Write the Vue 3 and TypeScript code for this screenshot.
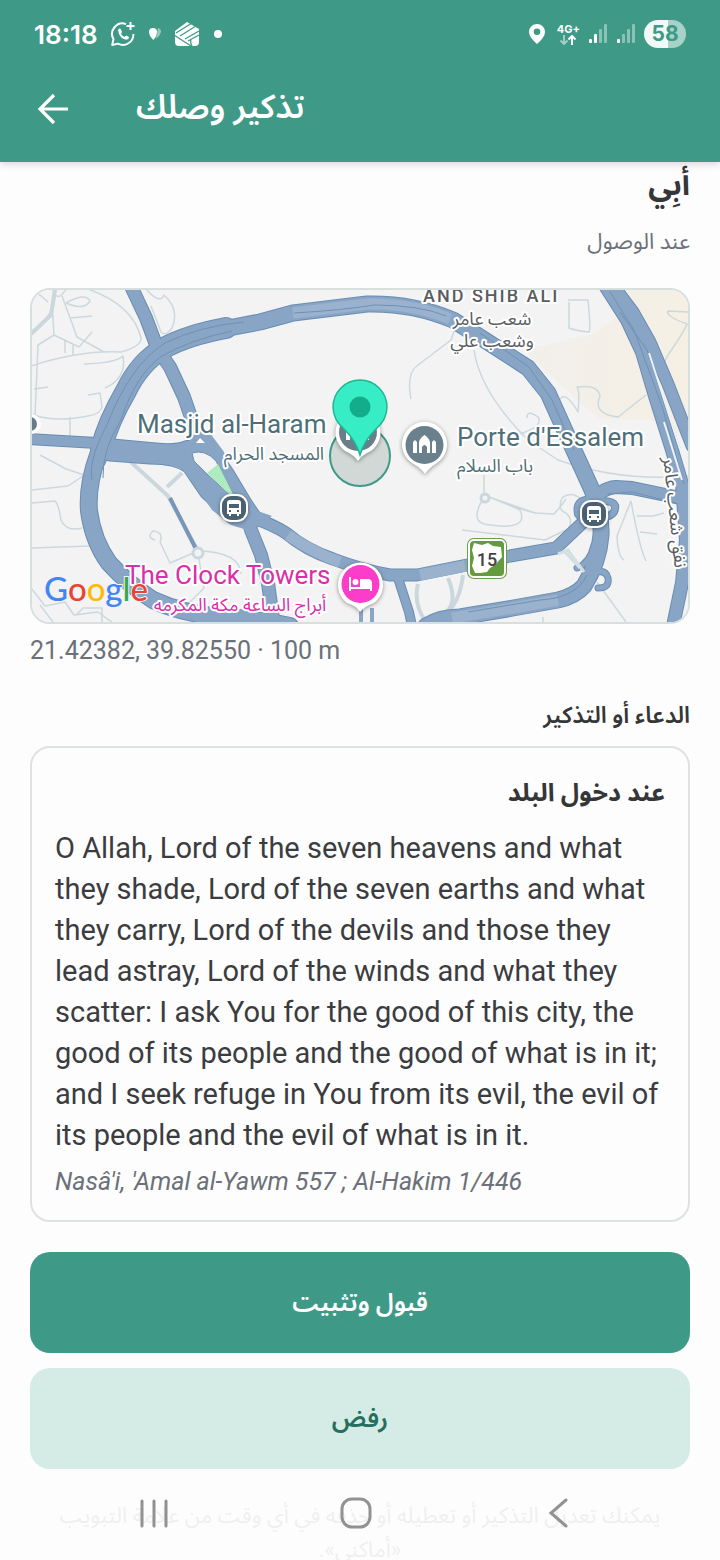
<script setup lang="ts">
interface Road { d: string; w: number }

const roads: Road[] = [
  { d: 'M604 284L627 320L642 352L655 396L672 450L682 484L686 540L682 583L673 626', w: 14 },
  { d: 'M612 284L633 312L650 342L668 384L692 446', w: 13 },
  { d: 'M130 284L146 318L158 350L170 367L184 397L193 423L202 443', w: 14 },
  { d: 'M28 439L97 443L150 448Q176 451 187 446L205 446Q222 462 228 472L246 502L258 520', w: 12 },
  { d: 'M110 453L150 456Q178 456 190 466L207 491L233 516L252 521', w: 17 },
  { d: 'M247 515L251 530L261 555L268 583L274 626', w: 14 },
  { d: 'M233 512Q265 520 286 533Q306 550 333 559Q362 570 390 575L417 575L467 565L510 556L556 548L575 530L596 510', w: 13 },
  { d: 'M398 578L409 612L412 626', w: 10 },
  { d: 'M590 506Q600 488 616 487L632 488L680 498', w: 14 },
  { d: 'M592 500Q575 498 578 514Q584 522 594 514', w: 8 },
  { d: 'M594 502Q620 498 614 512Q608 520 594 514', w: 8 },
  { d: 'M597 572Q606 570 608 578Q610 588 598 588', w: 7 },
  { d: 'M577 568Q590 563 594 545', w: 7 },
  { d: 'M98 455Q87 485 89 511Q93 541 109 563Q128 584 153 600Q183 614 222 617Q252 618 290 626', w: 18 },
  { d: 'M98 460Q106 431 124 397Q137 367 160 352Q184 338 218 330L260 322L293 313L367 304Q413 303 453 320L480 337L528 368L548 393L566 433L592 490Q602 515 601 535Q599 562 584 586Q575 596 558 600L513 608L460 617Q440 617 426 626', w: 17 },
  { d: 'M101 449Q108 422 126 391Q140 362 164 348Q188 335 226 328', w: 22 },
]

const seams: string[] = [
  'M92 480Q88 460 107 425Q130 365 165 343Q200 326 244 322',
  'M103 478Q102 450 121 420Q136 374 162 356Q190 340 232 331',
  'M294 313Q345 310 374 305Q420 305 446 316',
  'M480 333L529 367L552 400L574 450',
  'M620 312L647 350L680 448',
  'M610 292L634 330L662 406L684 484',
  'M608 494L632 492L676 503',
  'M468 612L540 600Q576 598 587 575',
]

const lanes: string[] = [
  'M56 289L54 305Q48 320 31 332M66 289Q57 304 53 289M52 304L54 335L79 347M62 296L77 337L104 352M54 335L38 345L34 440M31 366Q80 350 121 352Q142 346 141 338Q133 305 88 289',
  'M66 303Q86 292 90 301Q84 311 66 303M70 318L92 316M92 332L79 347M34 290L48 302M84 364Q116 363 123 356Q127 378 105 388M34 389L48 387M88 395L100 393L102 407Q101 414 88 416Q54 423 31 414M70 417V438M65 339V353M73 345V355',
  'M146 289Q160 305 164 295Q180 309 172 328Q166 337 161 332L151 306',
  'M31 490L68 486L83 476M31 503L55 501Q59 505 61 520Q66 532 82 528M40 455L66 469L84 475M31 548L90 546M31 588L45 606L65 602L74 615L98 612M40 605L53 622M76 615L83 608H102V622M98 612L113 623',
  'M198 551L170 563L160 542Q164 532 153 531Q146 537 155 540M198 551Q240 552 241 574M198 553L204 588L190 602',
  'M458 320L451 340L418 365Q406 373 411 399M474 350Q480 392 528 440L558 460Q620 482 690 476M568 300H588Q591 330 589 332Q577 331 569 328V302',
  'M560 399Q566 391 578 412Q580 390 577 387Q598 384 600 396Q592 414 618 417L646 395M690 312L668 311Q665 316 687 324Q684 332 668 355L655 382M527 418Q527 409 538 417Q544 426 520 434',
  'M484 475V497Q470 520 484 524Q530 532 520 510Q500 501 489 497M489 497L535 513M462 530L545 540L568 529Q574 520 566 513Q557 510 562 498Q573 489 585 503M497 500Q525 511 536 513L554 514Q562 505 566 499',
  'M631 501L617 536Q618 557 624 560M631 501Q640 550 646 561M637 516H653L664 513M640 532L657 534M597 582L626 622M543 617V623',
]
</script>

<template>
  <div class="screen">
    <header class="top">
      <div class="status">
        <div class="group">
          <span class="clock">18:18</span>
          <svg class="s-wa" viewBox="0 0 26 26" width="26" height="26" fill="none" stroke="#fff" stroke-width="2">
            <path d="M16 3.1A10.4 10.4 0 0 0 3.5 18.1L2.2 24L8 22.6A10.5 10.5 0 0 0 23.4 13" stroke-linejoin="round" />
            <path d="M20.5 1V9M16.5 5H24.5" />
            <path d="M8 9Q9 6.5 10.7 8L12 11L11 13Q13 15.3 14.5 16L16.2 14.5L19 16Q19 18.5 16.5 18.7Q9 17.5 8 9Z" fill="#fff" stroke="none" />
          </svg>
          <svg viewBox="0 0 14 14" width="14" height="14">
            <path d="M10 1A4 4 0 0 1 13 5Q12 9 8 12Z" fill="#fff" opacity=".45" />
            <path d="M5 1A4 4 0 0 1 9 5Q9 9 5.5 13Q1 9 1 5A4 4 0 0 1 5 1Z" fill="#fff" />
          </svg>
          <svg viewBox="0 0 26 26" width="26" height="26">
            <path d="M1 10L13 1L25 8V21Q25 25 21 25H5Q1 25 1 21Z" fill="#fff" />
            <path d="M2 12L18 2M6 15L22 5M11 18L25 10M0 14L17 25M14 20L25 14M17 19Q16 22 18 25" stroke="#3e9a87" stroke-width="1.3" fill="none" />
          </svg>
          <i class="dot"></i>
        </div>
        <div class="group right">
          <svg viewBox="0 0 18 22" width="18" height="22">
            <path d="M9 1A8 8 0 0 1 17 9Q17 14 9 21Q1 14 1 9A8 8 0 0 1 9 1ZM9 5.5A3.3 3.3 0 1 0 9 12.1A3.3 3.3 0 1 0 9 5.5Z" fill="#fff" fill-rule="evenodd" />
          </svg>
          <div class="net">
            <span>4G+</span>
            <svg viewBox="0 0 18 10" width="18" height="10" fill="none" stroke="#fff" stroke-width="2">
              <path d="M5 0V9M1.5 5.5L5 9L8.500 5.5" opacity=".5" />
              <path d="M13 10V1M9.500 4.500L13 1L16.500 4.500" />
            </svg>
          </div>
          <svg viewBox="0 0 20 20" width="20" height="20" fill="#fff">
            <rect x="1" y="15" width="3" height="4" rx="1" /><rect x="6" y="10" width="3" height="9" rx="1" />
            <rect x="11" y="5" width="3" height="14" rx="1" opacity=".4" /><rect x="16" y="0" width="3" height="19" rx="1" opacity=".4" />
          </svg>
          <svg viewBox="0 0 20 20" width="20" height="20" fill="#fff">
            <rect x="1" y="15" width="3" height="4" rx="1" /><rect x="6" y="10" width="3" height="9" rx="1" opacity=".4" />
            <rect x="11" y="5" width="3" height="14" rx="1" opacity=".4" /><rect x="16" y="0" width="3" height="19" rx="1" opacity=".4" />
          </svg>
          <span class="battery">58</span>
        </div>
      </div>
      <div class="appbar">
        <button class="back" type="button" aria-label="رجوع">
          <svg viewBox="0 0 32 32" width="32" height="32" fill="none" stroke="#fff" stroke-width="3.200">
            <path d="M31 16H3M17 2L3 16L17 30" />
          </svg>
        </button>
        <h1 lang="ar" dir="rtl">تذكير وصلك</h1>
      </div>
    </header>

    <main lang="ar" dir="rtl">
      <h2 class="name">أبِي</h2>
      <p class="when">عند الوصول</p>

      <div class="map" dir="ltr">
        <svg viewBox="32 290 656 332" role="img" aria-label="Masjid al-Haram">
          <defs>
            <linearGradient id="sand" x1="0" x2="1"><stop offset="0" stop-color="#f2efec" /><stop offset="1" stop-color="#f5f0e3" /></linearGradient>
          </defs>
          <rect x="31" y="288" width="658" height="336" fill="#f4f3f4" />
          <path d="M624 288H690V440L650 420L600 419L577 400L540 365L525 350L590 335L616 318Z" fill="url(#sand)" />
          <path v-for="(d, i) in lanes" :key="'l' + i" :d="d" class="lane" />
          <path d="M122 454L155 484L168 496L198 551M167 487L182 473" class="street" />
          <path d="M418 584Q413 604 426 622M448 578Q458 602 446 612M463 575Q460 600 448 612M55 289L51 315L31 334" class="street" />
          <path v-for="(r, i) in roads" :key="'c' + i" :d="r.d" class="casing" :stroke-width="r.w" />
          <path v-for="(r, i) in roads" :key="'f' + i" :d="r.d" class="road" :stroke-width="r.w - 2" />
          <path d="M293 313L367 304Q413 303 450 319M288 535Q312 552 340 562M420 575L465 566M452 618L513 608L558 600" class="light" />
          <path v-for="(d, i) in seams" :key="'s' + i" :d="d" class="seam" />
          <path d="M649 353L680 449M664 422L682 480" stroke="#eef2f6" stroke-width="2" fill="none" />
          <path d="M170 498L196 549" stroke="#7796b9" stroke-width="4" />
          <path d="M361 608V623M372 608V623" stroke="#8ba6c5" stroke-width="4" />
          <path d="M165 449L187 443L195 433H210L224 452L235 482L255 510L272 516L250 531L231 525L212 510L197 488L183 470L165 463Z" fill="#89a5c5" />
          <path d="M192 453Q205 449 216 461L233 494H229L207 474L194 461Z" class="hole" />
          <path d="M207 473L218 464L233 494H229Z" fill="#aeecc0" />
          <path d="M200 438L205 443H196Z" fill="#fff" />
          <path d="M558 554L568 550L584 572M563 550L580 568" stroke="#d4dfe3" stroke-width="3" fill="none" />
          <circle cx="198" cy="553" r="5" class="round" /><circle cx="485" cy="498" r="4" class="round" />

          <circle cx="31" cy="424" r="10" fill="#fff" /><circle cx="30" cy="424" r="7" fill="#647d88" />

          <g class="label" fill="#4f6f78">
            <text x="137" y="433" class="en">Masjid al-Haram</text>
            <text x="274" y="460" class="ar">المسجد الحرام</text>
            <text x="457" y="446" class="en">Porte d'Essalem</text>
            <text x="495" y="472" class="ar">باب السلام</text>
          </g>
          <g class="label" fill="#5a5d5f">
            <text x="423" y="302" class="area">AND SHIB ALI</text>
            <text x="492" y="325" class="ar">شعب عامر</text>
            <text x="492" y="347" class="ar">وشعب علي</text>
            <text class="ar" transform="translate(669 513) rotate(84)">نفق شعب عامر</text>
          </g>
          <g class="label" fill="#d92fa9">
            <text x="125" y="584" class="en">The Clock Towers</text>
            <text x="240" y="611" class="ar">أبراج الساعة مكة المكرمه</text>
          </g>

          <circle cx="360" cy="456" r="30" fill="#78958a" fill-opacity=".28" stroke="#3e9a87" stroke-width="2" />
          <g class="pin">
            <path d="M358 461Q354 455 345 451A22.500 22.500 0 1 1 371 451Q362 455 358 461Z" fill="#fff" />
            <circle cx="358" cy="432" r="19" fill="#687f8b" />
            <path d="M346 440V430L348 428L350 430V440ZM365 440V430L367 428L369 430V440Z" fill="#fff" />
          </g>
          <path d="M360 455Q356 441 345 430Q333 420 333 407A27 27 0 0 1 387 407Q387 420 375 430Q364 441 360 455Z" fill="#36edc5" stroke="#20b692" stroke-width="1.500" />
          <circle cx="360" cy="407" r="10.500" fill="#14ad8b" />

          <g class="pin">
            <path d="M425 474Q421 468 412 463A22.500 22.500 0 1 1 437 463Q429 468 425 474Z" fill="#fff" />
            <circle cx="424.500" cy="445" r="19" fill="#6a818d" />
            <path d="M413 453V442L415 440L417 442V453ZM432 453V442L434 440L436 442V453ZM419 453V442Q420 438 424.500 435Q429 438 430 442V453H427V447Q424.500 443 422 447V453Z" fill="#fff" />
          </g>
          <g class="pin">
            <path d="M360 612Q357 606 347 603A22.500 22.500 0 1 1 374 603Q365 606 360 612Z" fill="#fff" />
            <circle cx="360.500" cy="584" r="19" fill="#fb3dca" />
            <path d="M350 577V591M350 588H371V591" stroke="#fff" stroke-width="2" fill="none" />
            <path d="M360 579H369Q372 580 372 583V588H360Z" fill="#fff" /><circle cx="355.500" cy="582" r="3" fill="#fff" />
          </g>

          <g v-for="[x, y] in [[234, 508], [594, 514]]" :key="x" :transform="`translate(${x} ${y})`" class="pin">
            <rect x="-14" y="-14" width="28" height="28" rx="11" fill="#fff" />
            <rect x="-12" y="-12" width="24" height="24" rx="9" fill="#4a6172" />
            <path d="M-7 -5Q-7 -8 -4 -8H4Q7 -8 7 -5V6H5V8H3V6H-3V8H-5V6H-7Z" fill="#fff" />
            <path d="M-5 -4H5V0H-5ZM-5 2H-3V4H-5ZM3 2H5V4H3Z" fill="#4a6172" />
          </g>

          <rect x="467" y="538" width="40" height="41" rx="7" fill="#6a9f45" />
          <rect x="469" y="540" width="36" height="37" rx="5" fill="#649b3e" stroke="#fff" stroke-width="2" />
          <path d="M474 543L482 545L488 543L493 546L501 547L502 557L495 565L490 568L487 572L480 573L475 573L472 566L474 558L472 550Z" fill="#fff" />
          <text x="487" y="566" class="shield">15</text>

          <text x="44" y="601" class="google"><tspan fill="#4285f4">G</tspan><tspan fill="#ea4335">o</tspan><tspan fill="#fbbc05">o</tspan><tspan fill="#4285f4">g</tspan><tspan fill="#34a853">l</tspan><tspan fill="#ea4335">e</tspan></text>
        </svg>
      </div>
      <p class="coords" dir="ltr">21.42382, 39.82550 · 100 m</p>

      <h3 class="section">الدعاء أو التذكير</h3>
      <section class="card">
        <h4>عند دخول البلد</h4>
        <p class="quote" dir="ltr" lang="en">O Allah, Lord of the seven heavens and what they shade, Lord of the seven earths and what they carry, Lord of the devils and those they lead astray, Lord of the winds and what they scatter: I ask You for the good of this city, the good of its people and the good of what is in it; and I seek refuge in You from its evil, the evil of its people and the evil of what is in it.</p>
        <p class="source" dir="ltr" lang="en">Nasâ'i, 'Amal al-Yawm 557 ; Al-Hakim 1/446</p>
      </section>

      <button class="action primary" type="button">قبول وتثبيت</button>
      <button class="action soft" type="button">رفض</button>
      <p class="hint">يمكنك تعديل التذكير أو تعطيله أو حذفه في أي وقت من علامة التبويب «أماكني».</p>
    </main>

    <nav class="sysnav">
      <button type="button" aria-label="Recents">
        <svg viewBox="0 0 30 32" width="30" height="32" stroke="#929292" stroke-width="3" stroke-linecap="round"><path d="M3 4V29M15 4V29M27 4V29" /></svg>
      </button>
      <button type="button" aria-label="Home">
        <svg viewBox="0 0 32 32" width="32" height="32" fill="none" stroke="#929292" stroke-width="3"><rect x="2" y="2" width="28" height="28" rx="10" /></svg>
      </button>
      <button type="button" aria-label="Back">
        <svg viewBox="0 0 20 32" width="20" height="32" fill="none" stroke="#929292" stroke-width="3" stroke-linecap="round"><path d="M18 3L3 16L18 29" /></svg>
      </button>
    </nav>
  </div>
</template>

<style>
body {
  background: #fdfdfd;
}
</style>

<style scoped>
.screen {
  height: 100vh;
  overflow: hidden;
  display: flex;
  flex-direction: column;
  background: #fdfdfd;
  color: #343638;
  font-family: Roboto, "Noto Sans Arabic", "DejaVu Sans", sans-serif;
}
h1, h2, h3, h4, p {
  margin: 0;
}
button {
  border: 0;
  padding: 0;
  background: none;
  font-family: inherit;
  cursor: pointer;
}
svg {
  display: block;
  flex: none;
}
.top {
  flex: none;
  background: #3e9a87;
  color: #fff;
  box-shadow: 0 2px 8px rgba(0, 0, 0, 0.16);
  position: relative;
  z-index: 1;
}
.status {
  display: flex;
  justify-content: space-between;
  height: 68px;
  padding: 0 34px;
}
.group {
  display: flex;
  align-items: center;
  gap: 12px;
}
.right {
  gap: 8px;
}
.clock {
  font: 600 26px Inter, sans-serif;
}
.dot {
  width: 8px;
  height: 8px;
  margin-left: 2px;
  border-radius: 50%;
  background: #fff;
}
.net {
  display: flex;
  flex-direction: column;
  align-items: center;
  margin-left: 3px;
  font: 700 11px/12px Inter, sans-serif;
}
.battery {
  width: 42px;
  border-radius: 14px;
  background: linear-gradient(90deg, #f0faf7 58%, #a8d2c8 58%);
  color: #3e9a87;
  font: 700 21px/28px Inter, sans-serif;
  text-align: center;
}
.appbar {
  display: flex;
  align-items: center;
  gap: 67px;
  height: 94px;
  padding: 0 37px;
}
.back {
  padding-bottom: 12px;
}
.appbar h1 {
  padding-bottom: 16px;
  font-size: 33px;
  line-height: 48px;
  font-weight: 600;
}
main {
  flex: none;
  padding: 0 30px;
}
.name {
  font-size: 30px;
  line-height: 46px;
  font-weight: 700;
}
.when {
  padding: 19px 0 31px;
  font-size: 22px;
  line-height: 30px;
  color: #6c7078;
}
.map {
  overflow: hidden;
  border: 2px solid #d8dfdf;
  border-radius: 20px;
}
.map svg {
  width: 100%;
  height: auto;
}
.coords {
  padding: 11px 0 33px;
  font-size: 25px;
  line-height: 32px;
  color: #6c7078;
}
.section {
  padding-bottom: 14px;
  font-size: 23px;
  line-height: 32px;
  font-weight: 600;
}
.card {
  padding: 24px 23px 21px;
  border: 2px solid #dfe2e3;
  border-radius: 20px;
}
.card h4 {
  padding-bottom: 14px;
  font-size: 25px;
  line-height: 42px;
  font-weight: 700;
}
.quote {
  font-size: 29px;
  line-height: 41px;
  color: #3b3c3f;
}
.source {
  padding-top: 9px;
  font-size: 25px;
  line-height: 34px;
  font-style: italic;
  color: #6c7078;
}
.action {
  display: block;
  width: 100%;
  height: 101px;
  border-radius: 20px;
  font-size: 25px;
  font-weight: 600;
}
.primary {
  margin-top: 30px;
  background: #3e9a87;
  color: #fff;
}
.soft {
  margin-top: 15px;
  background: #d4ece5;
  color: #266f60;
}
.hint {
  padding: 30px 20px 0;
  font-size: 22px;
  line-height: 34px;
  text-align: center;
  color: #6c7078;
}
.sysnav {
  position: fixed;
  inset: auto 0 0;
  z-index: 2;
  display: flex;
  height: 91px;
  padding: 0 61px 3px 53px;
  background: rgba(253, 253, 253, 0.9);
  box-sizing: border-box;
}
.sysnav button {
  flex: 1;
  display: flex;
  align-items: center;
  justify-content: center;
}
.lane, .street, .casing, .road, .seam, .light {
  fill: none;
  stroke-linejoin: round;
}
.lane {
  stroke: #cbd8dd;
  stroke-width: 1.5;
}
.street {
  stroke: #cad8dd;
  stroke-width: 4;
}
.casing {
  stroke: #698db3;
  stroke-linecap: round;
}
.road {
  stroke: #89a5c5;
  stroke-linecap: round;
}
.light {
  stroke: #9ab2ce;
  stroke-width: 11;
}
.seam {
  stroke: #6e91b6;
  stroke-width: 1;
}
.hole {
  fill: #f4f3f4;
  stroke: #698db3;
  stroke-width: 1;
}
.round {
  fill: #f4f3f4;
  stroke: #cad8dd;
  stroke-width: 3;
}
.label text {
  stroke: #fff;
  stroke-width: 4px;
  stroke-linejoin: round;
  paint-order: stroke;
}
.label .en {
  font-size: 26px;
}
.ar {
  font-size: 18px;
  text-anchor: middle;
}
.area {
  font-size: 18px;
  font-weight: 500;
  letter-spacing: 2px;
}
.pin {
  filter: drop-shadow(0 1px 2px rgba(0, 0, 0, 0.4));
}
.shield {
  font-size: 18px;
  font-weight: 500;
  text-anchor: middle;
  fill: #444;
}
.google {
  font-family: Lato, sans-serif;
  font-size: 33px;
  font-weight: 500;
  stroke: #f4f3f4;
  stroke-width: 2px;
  paint-order: stroke;
}
</style>
